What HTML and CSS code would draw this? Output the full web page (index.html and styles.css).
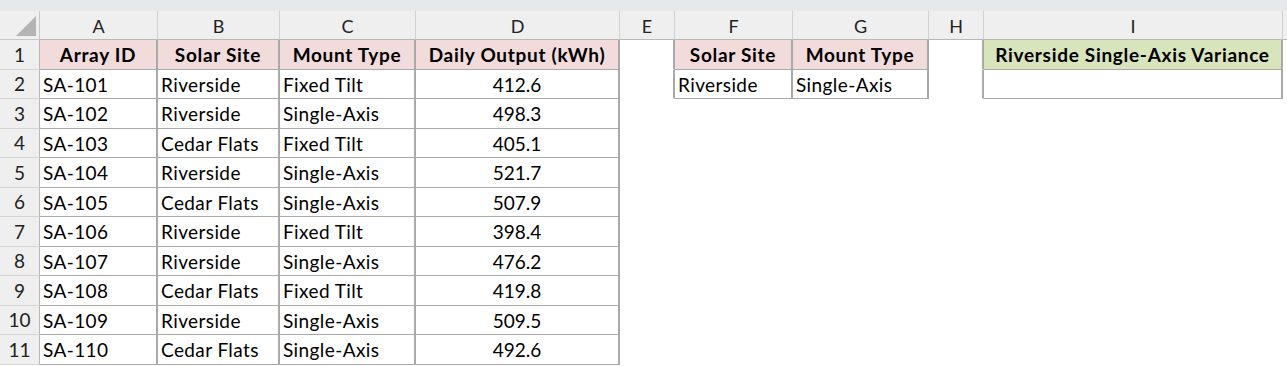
FILE: index.html
```html
<!DOCTYPE html>
<html>
<head>
<meta charset="utf-8">
<link rel="stylesheet" href="styles.css">
</head>
<body>
<div class="topbar"></div>
<div class="sheet">
  <div class="corner"><svg width="20" height="20" viewBox="0 0 20 20"><polygon points="20,0 20,20 0,20" fill="#b4b4b4"/></svg></div>
  <div class="ch">A</div><div class="ch">B</div><div class="ch">C</div><div class="ch">D</div><div class="ch">E</div><div class="ch">F</div><div class="ch">G</div><div class="ch">H</div><div class="ch">I</div><div class="ch last"></div>

  <div class="rh">1</div>
  <div class="c hd b">Array ID</div><div class="c hd b">Solar Site</div><div class="c hd b">Mount Type</div><div class="c hd b">Daily Output (kWh)</div>
  <div class="c e"></div><div class="c hd b">Solar Site</div><div class="c hd b">Mount Type</div><div class="c e"></div><div class="c hg b">Riverside Single-Axis Variance</div><div class="c"></div>

  <div class="rh">2</div>
  <div class="c b">SA-101</div><div class="c b">Riverside</div><div class="c b">Fixed Tilt</div><div class="c b n">412.6</div>
  <div class="c e"></div><div class="c b">Riverside</div><div class="c b">Single-Axis</div><div class="c e"></div><div class="c b"></div><div class="c"></div>

  <div class="rh">3</div>
  <div class="c b">SA-102</div><div class="c b">Riverside</div><div class="c b">Single-Axis</div><div class="c b n">498.3</div>
  <div class="c"></div><div class="c"></div><div class="c"></div><div class="c"></div><div class="c"></div><div class="c"></div>

  <div class="rh">4</div>
  <div class="c b">SA-103</div><div class="c b">Cedar Flats</div><div class="c b">Fixed Tilt</div><div class="c b n">405.1</div>
  <div class="c"></div><div class="c"></div><div class="c"></div><div class="c"></div><div class="c"></div><div class="c"></div>

  <div class="rh">5</div>
  <div class="c b">SA-104</div><div class="c b">Riverside</div><div class="c b">Single-Axis</div><div class="c b n">521.7</div>
  <div class="c"></div><div class="c"></div><div class="c"></div><div class="c"></div><div class="c"></div><div class="c"></div>

  <div class="rh">6</div>
  <div class="c b">SA-105</div><div class="c b">Cedar Flats</div><div class="c b">Single-Axis</div><div class="c b n">507.9</div>
  <div class="c"></div><div class="c"></div><div class="c"></div><div class="c"></div><div class="c"></div><div class="c"></div>

  <div class="rh">7</div>
  <div class="c b">SA-106</div><div class="c b">Riverside</div><div class="c b">Fixed Tilt</div><div class="c b n">398.4</div>
  <div class="c"></div><div class="c"></div><div class="c"></div><div class="c"></div><div class="c"></div><div class="c"></div>

  <div class="rh">8</div>
  <div class="c b">SA-107</div><div class="c b">Riverside</div><div class="c b">Single-Axis</div><div class="c b n">476.2</div>
  <div class="c"></div><div class="c"></div><div class="c"></div><div class="c"></div><div class="c"></div><div class="c"></div>

  <div class="rh">9</div>
  <div class="c b">SA-108</div><div class="c b">Cedar Flats</div><div class="c b">Fixed Tilt</div><div class="c b n">419.8</div>
  <div class="c"></div><div class="c"></div><div class="c"></div><div class="c"></div><div class="c"></div><div class="c"></div>

  <div class="rh">10</div>
  <div class="c b">SA-109</div><div class="c b">Riverside</div><div class="c b">Single-Axis</div><div class="c b n">509.5</div>
  <div class="c"></div><div class="c"></div><div class="c"></div><div class="c"></div><div class="c"></div><div class="c"></div>

  <div class="rh">11</div>
  <div class="c b">SA-110</div><div class="c b">Cedar Flats</div><div class="c b">Single-Axis</div><div class="c b n">492.6</div>
  <div class="c"></div><div class="c"></div><div class="c"></div><div class="c"></div><div class="c"></div><div class="c"></div>
</div>
</body>
</html>
```

FILE: styles.css
```css
html, body {
  margin: 0;
  padding: 0;
  background: #ffffff;
  overflow: hidden;
}
body {
  width: 1287px;
  height: 366px;
  font-family: "Lato", "Open Sans", sans-serif;
  font-size: 19px;
  letter-spacing: 0.4px;
  color: #000;
}
.topbar {
  height: 11px;
  background: #e6e9ec;
}
.sheet {
  display: grid;
  grid-template-columns: 40px 118px 122px 136px 204px 55px 118px 136px 55px 299px 4px;
  grid-template-rows: 29px repeat(11, 29.5px);
}
.corner {
  background: #efefef;
  border-right: 1px solid #c8c8c8;
  border-bottom: 1px solid #c8c8c8;
  display: flex;
  align-items: flex-end;
  justify-content: flex-end;
  padding: 0 3px 3px 0;
}
.ch {
  background: #efefef;
  border-right: 1px solid #d0d0d0;
  border-bottom: 1px solid #b8b8b8;
  display: flex;
  align-items: center;
  justify-content: center;
  color: #222;
  font-size: 18px;
  letter-spacing: 0;
  padding-top: 1px;
}
.ch.last { border-right: 0; }
.rh {
  background: #efefef;
  border-right: 1px solid #b8b8b8;
  border-bottom: 1px solid #d4d4d4;
  display: flex;
  align-items: center;
  justify-content: center;
  color: #222;
  letter-spacing: 0;
}
.c {
  display: flex;
  align-items: center;
  padding: 1px 0 0 3px;
  white-space: nowrap;
  overflow: hidden;
  border-right: 1px solid transparent;
  border-bottom: 1px solid transparent;
}
.c.b {
  border-right: 2px solid #a9a9a9;
  border-bottom: 1px solid #a9a9a9;
}
.c.e {
  border-right: 2px solid #a9a9a9;
}
.hd {
  background: #f2dcdb;
  font-weight: 700;
  letter-spacing: 0.7px;
  justify-content: center;
  padding-left: 0;
}
.hg {
  background: #d8e4bc;
  font-weight: 700;
  letter-spacing: 0.7px;
  justify-content: center;
  padding-left: 0;
}
.n {
  justify-content: center;
  padding-left: 0;
  letter-spacing: 0;
}
```
